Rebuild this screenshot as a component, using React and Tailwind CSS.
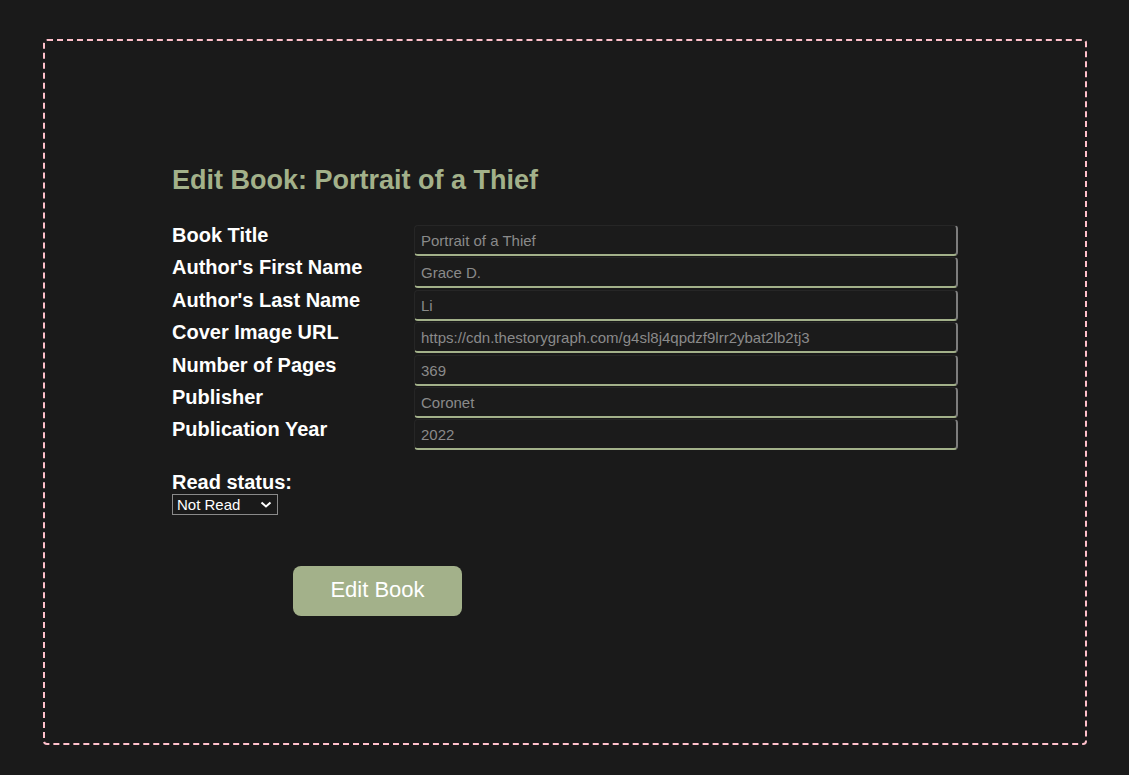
const fields = [
    ['Book Title', 'Portrait of a Thief'],
    ["Author's First Name", 'Grace D.'],
    ["Author's Last Name", 'Li'],
    ['Cover Image URL', 'https://cdn.thestorygraph.com/g4sl8j4qpdzf9lrr2ybat2lb2tj3'],
    ['Number of Pages', '369'],
    ['Publisher', 'Coronet'],
    ['Publication Year', '2022'],
];

export default function App() {
    return (
        <div className="min-h-screen bg-[#1a1a1a] pl-[43px] pr-[42px] pt-[39px] font-['Liberation_Sans',Arial,sans-serif]">
            <div className="h-[706px] rounded-[4px] border-2 border-dashed border-[#ffc0cb]">
                <form
                    onSubmit={(e) => e.preventDefault()}
                    className="ml-[127px] w-[786px] pt-[124px]"
                >
                    <h1 className="mb-[30px] text-[27px] font-bold leading-[30px] text-[#a3b18a]">
                        Edit Book: Portrait of a Thief
                    </h1>

                    <div className="flex flex-col gap-[1.4px]">
                        {fields.map(([label, value]) => (
                            <div key={label} className="flex items-start">
                                <label className="w-[242px] text-[20px] font-bold leading-[21px] text-white">
                                    {label}
                                </label>
                                <input
                                    type="text"
                                    defaultValue={value}
                                    className="h-[31px] w-[544px] rounded-[4px] border-t border-l border-r-2 border-b-2 border-t-[#262626] border-l-[#262626] border-r-[#7d7d7d] border-b-[#a3b18a] bg-[#1b1b1b] px-[6px] pt-[1px] text-[15px] text-[#8a8a8a] outline-none"
                                />
                            </div>
                        ))}
                    </div>

                    <div className="mt-[21px]">
                        <label className="block text-[20px] font-bold leading-[23px] text-white">
                            Read status:
                        </label>
                        <div className="relative w-[106px]">
                            <select className="block h-[21px] w-[106px] appearance-none border border-[#8a8a8a] bg-[#1a1a1a] pl-[4px] text-[15px] leading-[19px] text-white outline-none">
                                <option>Not Read</option>
                                <option>Reading</option>
                                <option>Read</option>
                            </select>
                            <svg
                                viewBox="0 0 12 7"
                                className="pointer-events-none absolute right-[6px] top-[7px] h-[7px] w-[12px]"
                            >
                                <path d="M1.5 1.5l4.5 4 4.5-4" fill="none" stroke="#fff" strokeWidth="2" />
                            </svg>
                        </div>
                    </div>

                    <button
                        type="submit"
                        className="ml-[121px] mt-[51px] h-[50px] w-[169px] rounded-[8px] bg-[#a3b18a] pb-[3px] text-[22px] text-white"
                    >
                        Edit Book
                    </button>
                </form>
            </div>
        </div>
    );
}
